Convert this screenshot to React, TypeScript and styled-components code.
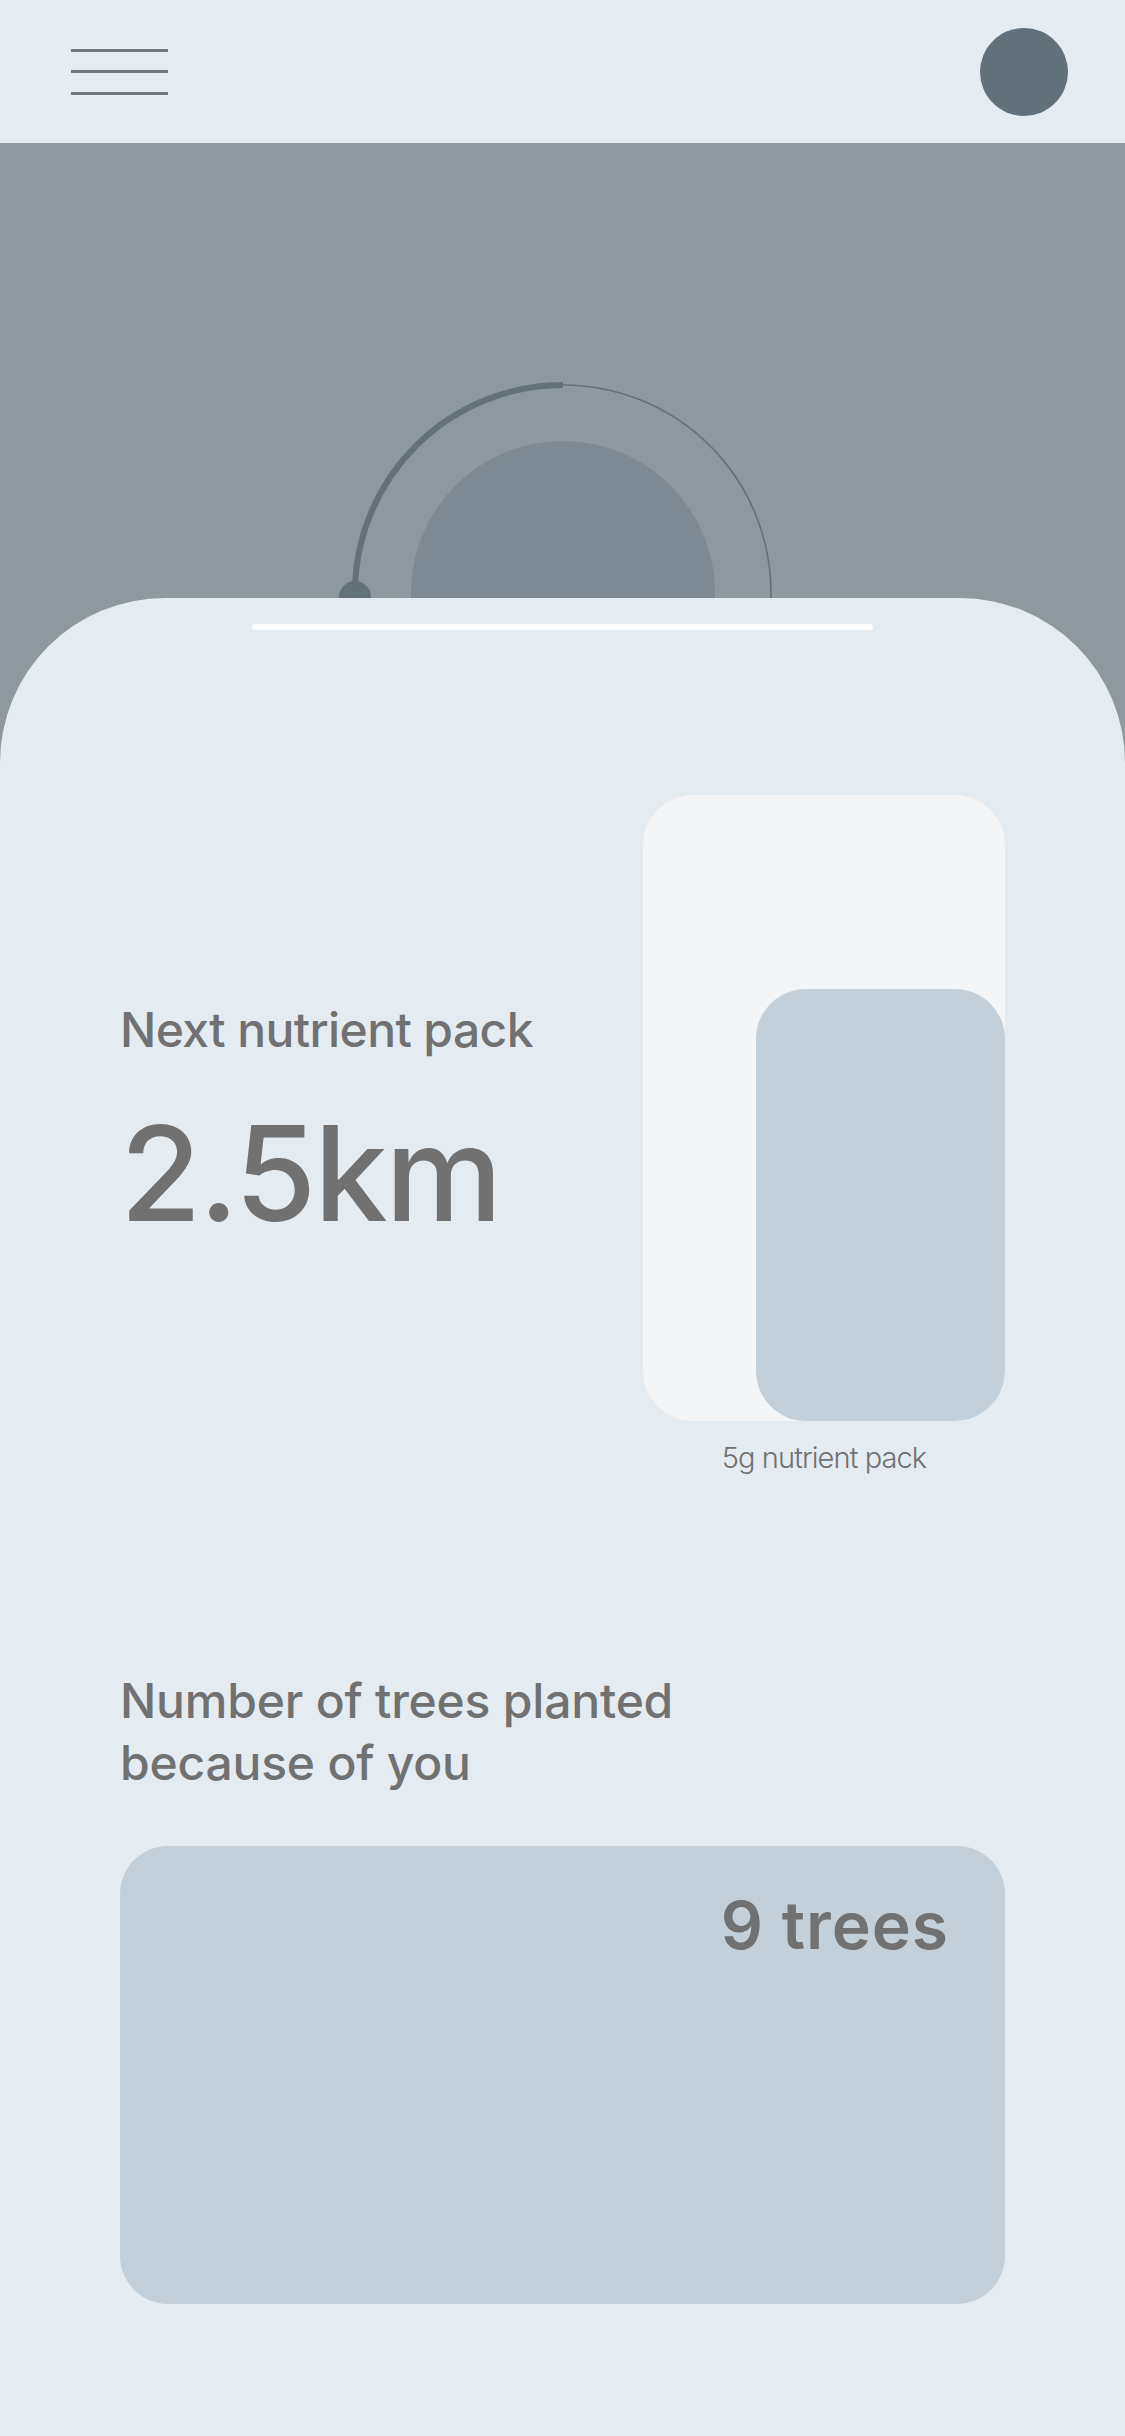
import React from "react";
import styled, { createGlobalStyle } from "styled-components";

const Global = createGlobalStyle`
  html, body {
    margin: 0;
    padding: 0;
    background: #e4ebf1;
  }
  body {
    font-family: Inter, "Noto Sans", "Liberation Sans", sans-serif;
    color: #717171;
  }
`;

const Page = styled.div`
  width: 1125px;
  min-height: 2436px;
  display: flex;
  flex-direction: column;
  background: #e4ebf1;
`;

const Header = styled.header`
  height: 143px;
  display: flex;
  align-items: center;
  justify-content: space-between;
  padding: 0 57px 0 71px;
  box-sizing: border-box;
`;

const Burger = styled.button`
  all: unset;
  width: 97px;
  display: flex;
  flex-direction: column;
  gap: 18.5px;
  cursor: pointer;
`;

const BurgerLine = styled.span`
  display: block;
  height: 3px;
  background: #74787c;
`;

const Avatar = styled.div`
  width: 88px;
  height: 88px;
  border-radius: 50%;
  background: #63717b;
`;

const Stage = styled.main`
  flex: 1;
  display: flex;
  flex-direction: column;
  background: #8d989f;
`;

const Hero = styled.section`
  height: 455px;
  display: flex;
  justify-content: center;
  align-items: flex-end;
  overflow: hidden;
`;

const Gauge = styled.svg`
  display: block;
  width: 460px;
  height: 230px;
`;

const Sheet = styled.div`
  flex: 1;
  background: #e4ebf1;
  border-radius: 165px 165px 0 0;
  padding: 26px 0 132px;
  display: flex;
  flex-direction: column;
`;

const Handle = styled.div`
  align-self: center;
  width: 621px;
  height: 6px;
  border-radius: 3px;
  background: #ffffff;
`;

const NutrientRow = styled.section`
  margin-top: 165px;
  padding: 0 120px;
  display: flex;
  justify-content: space-between;
  align-items: flex-start;
`;

const TextColumn = styled.div`
  padding-top: 204px;
  display: flex;
  flex-direction: column;
`;

const Heading = styled.h2<{ $tracking?: number }>`
  margin: 0;
  font-size: 48px;
  line-height: 62px;
  font-weight: 500;
  letter-spacing: ${(p) => (p.$tracking ?? -0.6)}px;
  color: #717171;
`;

const BigValue = styled.div`
  margin-top: 46px;
  font-size: 132px;
  line-height: 132px;
  font-weight: 500;
  letter-spacing: -2.5px;
  color: #717171;
`;

const PackColumn = styled.div`
  display: flex;
  flex-direction: column;
  align-items: center;
  gap: 19px;
`;

const PackFrame = styled.div`
  width: 362px;
  height: 626px;
  border-radius: 50px;
  background: #f3f5f7;
  display: flex;
  justify-content: flex-end;
  align-items: flex-end;
  overflow: hidden;
`;

const PackFill = styled.div`
  width: 249px;
  border-radius: 50px;
  background: #c3d0d9;
`;

const Caption = styled.div`
  font-size: 29px;
  line-height: 35px;
  font-weight: 300;
  letter-spacing: -0.9px;
  color: #717171;
`;

const TreesSection = styled.section`
  margin-top: 195px;
  padding: 0 120px;
  display: flex;
  flex-direction: column;
  gap: 52px;
`;

const TreesCard = styled.div`
  height: 458px;
  border-radius: 48px;
  background: #c3d0d9;
  display: flex;
  justify-content: flex-end;
  align-items: flex-start;
  padding: 46px 56px 0 0;
  box-sizing: border-box;
`;

const TreesValue = styled.div`
  font-size: 66px;
  line-height: 66px;
  font-weight: 600;
  letter-spacing: 1px;
  color: #717171;
`;

export default function App() {
  const fillPercent = 69;
  return (
    <>
      <Global />
      <Page>
        <Header>
          <Burger aria-label="Menu">
            <BurgerLine />
            <BurgerLine />
            <BurgerLine />
          </Burger>
          <Avatar />
        </Header>
        <Stage>
          <Hero>
            <Gauge viewBox="0 0 460 230">
              <circle cx="230" cy="225" r="152" fill="#7d8a93" />
              <path
                d="M 230 17 A 208 208 0 0 1 438 225 L 438 240"
                fill="none"
                stroke="#63717b"
                strokeWidth="1.6"
              />
              <path
                d="M 22 240 L 22 225 A 208 208 0 0 1 230 17"
                fill="none"
                stroke="#63717b"
                strokeWidth="6"
              />
              <circle cx="22" cy="229" r="16" fill="#63717b" />
            </Gauge>
          </Hero>
          <Sheet>
            <Handle />
            <NutrientRow>
              <TextColumn>
                <Heading>Next nutrient pack</Heading>
                <BigValue>2.5km</BigValue>
              </TextColumn>
              <PackColumn>
                <PackFrame>
                  <PackFill style={{ height: `${fillPercent}%` }} />
                </PackFrame>
                <Caption>5g nutrient pack</Caption>
              </PackColumn>
            </NutrientRow>
            <TreesSection>
              <Heading $tracking={-0.2}>
                Number of trees planted
                <br />
                because of you
              </Heading>
              <TreesCard>
                <TreesValue>9 trees</TreesValue>
              </TreesCard>
            </TreesSection>
          </Sheet>
        </Stage>
      </Page>
    </>
  );
}
